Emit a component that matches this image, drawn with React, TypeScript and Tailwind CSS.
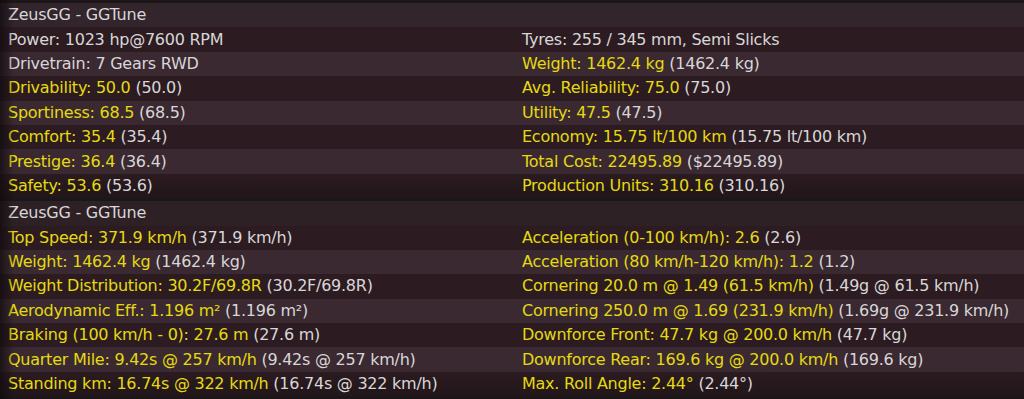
const Y = 'text-[#e4da12]';
const G = 'text-[#d8d6d8]';

type Cell = { label: string; extra: string } | { plain: string };

const sectionOne: [Cell, Cell][] = [
  [{ plain: 'Power: 1023 hp@7600 RPM' }, { plain: 'Tyres: 255 / 345 mm, Semi Slicks' }],
  [{ plain: 'Drivetrain: 7 Gears RWD' }, { label: 'Weight: 1462.4 kg', extra: '(1462.4 kg)' }],
  [{ label: 'Drivability: 50.0', extra: '(50.0)' }, { label: 'Avg. Reliability: 75.0', extra: '(75.0)' }],
  [{ label: 'Sportiness: 68.5', extra: '(68.5)' }, { label: 'Utility: 47.5', extra: '(47.5)' }],
  [{ label: 'Comfort: 35.4', extra: '(35.4)' }, { label: 'Economy: 15.75 lt/100 km', extra: '(15.75 lt/100 km)' }],
  [{ label: 'Prestige: 36.4', extra: '(36.4)' }, { label: 'Total Cost: 22495.89', extra: '($22495.89)' }],
  [{ label: 'Safety: 53.6', extra: '(53.6)' }, { label: 'Production Units: 310.16', extra: '(310.16)' }],
];

const sectionTwo: [Cell, Cell][] = [
  [{ label: 'Top Speed: 371.9 km/h', extra: '(371.9 km/h)' }, { label: 'Acceleration (0-100 km/h): 2.6', extra: '(2.6)' }],
  [{ label: 'Weight: 1462.4 kg', extra: '(1462.4 kg)' }, { label: 'Acceleration (80 km/h-120 km/h): 1.2', extra: '(1.2)' }],
  [
    { label: 'Weight Distribution: 30.2F/69.8R', extra: '(30.2F/69.8R)' },
    { label: 'Cornering 20.0 m @ 1.49 (61.5 km/h)', extra: '(1.49g @ 61.5 km/h)' },
  ],
  [
    { label: 'Aerodynamic Eff.: 1.196 m²', extra: '(1.196 m²)' },
    { label: 'Cornering 250.0 m @ 1.69 (231.9 km/h)', extra: '(1.69g @ 231.9 km/h)' },
  ],
  [
    { label: 'Braking (100 km/h - 0): 27.6 m', extra: '(27.6 m)' },
    { label: 'Downforce Front: 47.7 kg @ 200.0 km/h', extra: '(47.7 kg)' },
  ],
  [
    { label: 'Quarter Mile: 9.42s @ 257 km/h', extra: '(9.42s @ 257 km/h)' },
    { label: 'Downforce Rear: 169.6 kg @ 200.0 km/h', extra: '(169.6 kg)' },
  ],
  [
    { label: 'Standing km: 16.74s @ 322 km/h', extra: '(16.74s @ 322 km/h)' },
    { label: 'Max. Roll Angle: 2.44°', extra: '(2.44°)' },
  ],
];

function StatCell({ cell, right }: { cell: Cell; right?: boolean }) {
  return (
    <div className={right ? 'pl-[10px] whitespace-nowrap' : 'pl-2 whitespace-nowrap'}>
      {'plain' in cell ? (
        <span className={G}>{cell.plain}</span>
      ) : (
        <>
          <span className={Y}>{cell.label}</span> <span className={G}>{cell.extra}</span>
        </>
      )}
    </div>
  );
}

function Section({ rows, first }: { rows: [Cell, Cell][]; first?: boolean }) {
  return (
    <div className="flex flex-col">
      <div
        className={
          first
            ? 'h-[24.4px] flex items-center pl-2 bg-[#32252b] ' + G
            : 'h-[24.4px] flex items-center pl-2 bg-[#2e2126] ' + G
        }
      >
        ZeusGG - GGTune
      </div>
      {rows.map((row, i) => (
        <div
          key={i}
          className={
            i === rows.length - 1
              ? 'h-[24.4px] grid grid-cols-2 items-center bg-gradient-to-b from-[#2b1b20] to-[#211619]'
              : i % 2 === 0
                ? 'h-[24.4px] grid grid-cols-2 items-center bg-[#2c1c21]'
                : 'h-[24.4px] grid grid-cols-2 items-center bg-[#3a2930]'
          }
        >
          <StatCell cell={row[0]} />
          <StatCell cell={row[1]} right />
        </div>
      ))}
    </div>
  );
}

export default function App() {
  return (
    <div className="relative w-[1024px] h-[399px] overflow-hidden bg-[#1c1619] text-[16px] leading-none tracking-[-0.25px] font-['DejaVu_Sans',sans-serif]">
      <div className="h-[3px] bg-[#1d1719]" />
      <Section rows={sectionOne} first />
      <div className="h-[3px] bg-[#19171a]" />
      <Section rows={sectionTwo} />
      <div className="pointer-events-none absolute inset-y-0 left-0 w-[14px] bg-gradient-to-r from-[#0e0a0c]/70 to-transparent" />
    </div>
  );
}
